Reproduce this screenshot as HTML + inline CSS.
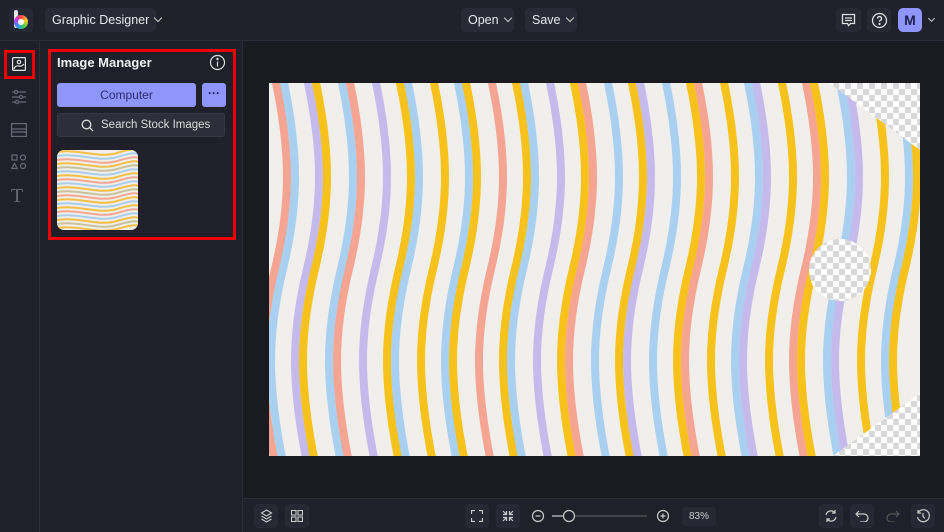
<!DOCTYPE html>
<html><head><meta charset="utf-8"><style>
*{margin:0;padding:0;box-sizing:border-box}
body{width:944px;height:532px;overflow:hidden;background:#1a1b21;font-family:"Liberation Sans",sans-serif;color:#e6e7ee;position:relative}
.top{position:absolute;left:0;top:0;width:944px;height:41px;background:#1f2029;border-bottom:1px solid #2b2d38}
.btn{position:absolute;background:#282a35;border-radius:4px;font-size:12.5px;color:#e8e9ef;line-height:24px;padding-left:7px;white-space:nowrap;height:24px}
.chev{display:inline-block;width:6px;height:6px;border-right:1.3px solid #ccc;border-bottom:1.3px solid #ccc;transform:rotate(45deg);margin-left:6px;position:relative;top:-3px}
.side{position:absolute;left:0;top:41px;width:40px;height:491px;background:#1f2029;border-right:1px solid #2b2d38}
.panel{position:absolute;left:40px;top:41px;width:203px;height:491px;background:#1f2029;border-right:1px solid #2b2d38}
.bottom{position:absolute;left:243px;top:498px;width:701px;height:34px;background:#1f2029;border-top:1px solid #2b2d38}
.ib{position:absolute;width:24px;height:24px;background:#262833;border-radius:4px}
svg{position:absolute}
</style></head><body>
<div class="top">
 <div class="ib" style="left:9px;top:8px;background:#262833"></div>
 <div style="position:absolute;left:14px;top:10px;width:4px;height:18px;background:#e8e8e8;border-radius:2px"></div>
 <div style="position:absolute;left:14px;top:15px;width:14px;height:14px;border-radius:50%;background:conic-gradient(#f44,#fc3,#4c4,#39f,#a4f,#f44)"></div>
 <div style="position:absolute;left:18px;top:19px;width:6px;height:6px;border-radius:50%;background:#fff"></div>
 <div class="btn" style="left:45px;top:8px;width:111px;">Graphic Designer<span class="chev"></span></div>
 <div class="btn" style="left:461px;top:8px;width:53px;">Open<span class="chev"></span></div>
 <div class="btn" style="left:525px;top:8px;width:52px;">Save<span class="chev"></span></div>
 <div class="ib" style="left:836px;top:8px;width:25px"></div>
 <svg style="left:841px;top:13px" width="15" height="15" viewBox="0 0 15 15" fill="none" stroke="#ddd" stroke-width="1.3"><path d="M1.5 1.5h12v9h-4l-2 2-1-2h-5z"/><path d="M4 5h7M4 7.5h7"/></svg>
 <div class="ib" style="left:867px;top:8px;"></div>
 <svg style="left:871px;top:12px" width="17" height="17" viewBox="0 0 17 17" fill="none" stroke="#ddd" stroke-width="1.3"><circle cx="8.5" cy="8.5" r="7"/><path d="M6.5 6.5a2 2 0 1 1 2.5 2c-.5.2-.5.6-.5 1.3"/><circle cx="8.5" cy="12" r=".5" fill="#ddd"/></svg>
 <div style="position:absolute;left:898px;top:8px;width:24px;height:24px;background:#8f96fb;border-radius:5px;color:#1f2050;font-size:14px;font-weight:bold;text-align:center;line-height:24px">M</div>
 <span class="chev" style="position:absolute;left:923px;top:16px;width:5px;height:5px"></span>
</div>
<div class="side">
 <div style="position:absolute;left:4px;top:9px;width:31px;height:29px;border:3px solid #e00"></div>
 <svg style="left:12px;top:16px" width="14" height="14" viewBox="0 0 14 14" fill="none" stroke="#e6e6e6" stroke-width="1.2"><rect x=".6" y=".6" width="12.8" height="12.8" rx="1"/><circle cx="7" cy="5" r="1.7"/><path d="M2 12c1-3 3-3.5 5-3s3 0 5-2"/></svg>
 <svg style="left:11px;top:48px" width="16" height="16" viewBox="0 0 16 16" fill="none" stroke="#666a78" stroke-width="1.2"><path d="M1 3h14M1 8h14M1 13h14"/><circle cx="5" cy="3" r="1.6" fill="#1f2029"/><circle cx="10" cy="8" r="1.6" fill="#1f2029"/><circle cx="6" cy="13" r="1.6" fill="#1f2029"/></svg>
 <svg style="left:11px;top:82px" width="16" height="14" viewBox="0 0 16 14" fill="none" stroke="#666a78" stroke-width="1.2"><rect x=".6" y=".6" width="14.8" height="12.8"/><path d="M1 6h14M1 9h14"/></svg>
 <svg style="left:11px;top:113px" width="16" height="16" viewBox="0 0 16 16" fill="none" stroke="#666a78" stroke-width="1.2"><rect x="1" y="1" width="5" height="5"/><circle cx="12" cy="3.5" r="2.5"/><path d="M3.5 9.5l2.7 5H.8z"/><circle cx="12" cy="12" r="2.5"/></svg>
 <div style="position:absolute;left:11px;top:144px;font-family:'Liberation Serif',serif;font-size:20px;color:#666a78">T</div>
</div>
<div class="panel">
 <div style="position:absolute;left:8px;top:8px;width:188px;height:191px;border:3px solid #e00"></div>
 <div style="position:absolute;left:17px;top:14px;font-size:13px;font-weight:bold;color:#f0f0f4">Image Manager</div>
 <svg style="left:169px;top:13px" width="17" height="17" viewBox="0 0 17 17" fill="none" stroke="#ddd" stroke-width="1.2"><circle cx="8.5" cy="8.5" r="7"/><path d="M8.5 7.5v5"/><circle cx="8.5" cy="5" r=".6" fill="#ddd"/></svg>
 <div style="position:absolute;left:17px;top:42px;width:139px;height:24px;background:#8f96fb;border-radius:3px;color:#2a2d6a;font-size:12px;text-align:center;line-height:24px">Computer</div>
 <div style="position:absolute;left:162px;top:42px;width:24px;height:24px;background:#8f96fb;border-radius:3px;color:#1a1b40;font-size:12px;text-align:center;line-height:20px;font-weight:bold">···</div>
 <div style="position:absolute;left:17px;top:72px;width:168px;height:24px;background:#2c2e39;border-radius:3px;border:1px solid #363845;color:#ddd;font-size:11.5px;line-height:22px;padding-left:43px;white-space:nowrap">Search Stock Images</div>
 <svg style="left:41px;top:78px" width="13" height="13" viewBox="0 0 13 13" fill="none" stroke="#ddd" stroke-width="1.3"><circle cx="5.5" cy="5.5" r="4.3"/><path d="M8.6 8.6l3.5 3.5"/></svg>
 <svg style="left:17px;top:109px" width="81" height="80" viewBox="0 0 81 80"><defs><clipPath id="tc"><rect width="81" height="80" rx="7"/></clipPath><path id="h" d="M-5,0 C20,-6 40,6 60,0 S80,-4 90,0" fill="none" stroke-width="2"/></defs><g clip-path="url(#tc)"><rect width="81" height="80" fill="#f2efe8"/>
 <use href="#h" y="3" stroke="#f2c04a"/><use href="#h" y="7" stroke="#a9cfee"/><use href="#h" y="11" stroke="#f5a896"/><use href="#h" y="15" stroke="#f2c04a"/><use href="#h" y="19" stroke="#c7c2a0"/><use href="#h" y="23" stroke="#a9cfee"/><use href="#h" y="27" stroke="#f2c04a"/><use href="#h" y="31" stroke="#f5a896"/><use href="#h" y="35" stroke="#a9cfee"/><use href="#h" y="39" stroke="#f2c04a"/><use href="#h" y="43" stroke="#c7c2a0"/><use href="#h" y="47" stroke="#f5a896"/><use href="#h" y="51" stroke="#f2c04a"/><use href="#h" y="55" stroke="#a9cfee"/><use href="#h" y="59" stroke="#f2c04a"/><use href="#h" y="63" stroke="#f5a896"/><use href="#h" y="67" stroke="#a9cfee"/><use href="#h" y="71" stroke="#f2c04a"/><use href="#h" y="75" stroke="#c7c2a0"/><use href="#h" y="79" stroke="#f2c04a"/></g></svg>
</div>
<svg style="left:269px;top:83px" width="651" height="373" viewBox="0 0 651 373">
 <defs>
  <path id="w" d="M0,-5 C16,70 16,120 0,186 S-16,300 0,380" fill="none" stroke-width="8"/>
  <pattern id="ck" width="12" height="12" patternUnits="userSpaceOnUse"><rect width="12" height="12" fill="#fff"/><rect width="6" height="6" fill="#d8d8d8"/><rect x="6" y="6" width="6" height="6" fill="#d8d8d8"/></pattern>
 </defs>
 <rect width="651" height="373" fill="#f1efec"/>
 <g>
  <use href="#w" x="6" stroke="#f6a593"/><use href="#w" x="14" stroke="#a9d0f0"/><use href="#w" x="38" stroke="#c4bbec"/><use href="#w" x="46" stroke="#f7c21b"/><use href="#w" x="72" stroke="#a9d0f0"/><use href="#w" x="80" stroke="#f6a593"/><use href="#w" x="106" stroke="#c4bbec"/><use href="#w" x="130" stroke="#f7c21b"/><use href="#w" x="138" stroke="#a9d0f0"/><use href="#w" x="164" stroke="#f7c21b"/><use href="#w" x="188" stroke="#a9d0f0"/><use href="#w" x="196" stroke="#f7c21b"/><use href="#w" x="222" stroke="#f6a593"/><use href="#w" x="246" stroke="#f7c21b"/><use href="#w" x="254" stroke="#a9d0f0"/><use href="#w" x="280" stroke="#c4bbec"/><use href="#w" x="304" stroke="#f7c21b"/><use href="#w" x="312" stroke="#f6a593"/><use href="#w" x="338" stroke="#a9d0f0"/><use href="#w" x="362" stroke="#f7c21b"/><use href="#w" x="370" stroke="#c4bbec"/><use href="#w" x="396" stroke="#a9d0f0"/><use href="#w" x="420" stroke="#f7c21b"/><use href="#w" x="428" stroke="#f6a593"/><use href="#w" x="454" stroke="#f7c21b"/><use href="#w" x="478" stroke="#a9d0f0"/><use href="#w" x="486" stroke="#c4bbec"/><use href="#w" x="512" stroke="#f7c21b"/><use href="#w" x="536" stroke="#f6a593"/><use href="#w" x="544" stroke="#f7c21b"/><use href="#w" x="570" stroke="#a9d0f0"/><use href="#w" x="578" stroke="#c4bbec"/><use href="#w" x="604" stroke="#f7c21b"/><use href="#w" x="628" stroke="#a9d0f0"/><use href="#w" x="636" stroke="#f7c21b"/>
 </g>
 <polygon points="560,0 651,0 651,67" fill="url(#ck)"/>
 <polygon points="651,310 651,373 564,373" fill="url(#ck)"/>
 <circle cx="571" cy="187" r="31" fill="url(#ck)"/>
</svg>
<div class="bottom">
 <div class="ib" style="left:11px;top:5px"></div>
 <svg style="left:17px;top:10px" width="13" height="14" viewBox="0 0 13 14" fill="none" stroke="#ccc" stroke-width="1.1"><path d="M6.5 1l5 3-5 3-5-3z"/><path d="M1.5 7l5 3 5-3M1.5 10l5 3 5-3"/></svg>
 <div class="ib" style="left:42px;top:5px"></div>
 <svg style="left:48px;top:11px" width="12" height="12" viewBox="0 0 12 12" fill="none" stroke="#ccc" stroke-width="1.1"><rect x=".5" y=".5" width="4.5" height="4.5"/><rect x="7" y=".5" width="4.5" height="4.5"/><rect x=".5" y="7" width="4.5" height="4.5"/><rect x="7" y="7" width="4.5" height="4.5"/></svg>
 <div class="ib" style="left:222px;top:5px"></div>
 <svg style="left:228px;top:11px" width="12" height="12" viewBox="0 0 12 12" fill="none" stroke="#ccc" stroke-width="1.2"><path d="M.5 4V.5H4M8 .5h3.5V4M11.5 8v3.5H8M4 11.5H.5V8"/></svg>
 <div class="ib" style="left:253px;top:5px"></div>
 <svg style="left:259px;top:11px" width="12" height="12" viewBox="0 0 12 12" fill="none" stroke="#ccc" stroke-width="1.2"><path d="M1 1l3.5 3.5M1 4.5h3.5V1M11 1L7.5 4.5M7.5 1v3.5H11M1 11l3.5-3.5M1 7.5h3.5V11M11 11L7.5 7.5M7.5 11V7.5H11"/></svg>
 <svg style="left:288px;top:10px" width="125" height="14" viewBox="0 0 125 14" fill="none" stroke="#ccc" stroke-width="1.2"><circle cx="7" cy="7" r="5.5"/><path d="M4.5 7h5"/><path d="M21 7h11"/><circle cx="38" cy="7" r="5.5"/><path d="M44 7h72" stroke="#666" stroke-width="1"/></svg>
 <svg style="left:413px;top:10px" width="14" height="14" viewBox="0 0 14 14" fill="none" stroke="#ccc" stroke-width="1.2"><circle cx="7" cy="7" r="5.5"/><path d="M4.5 7h5M7 4.5v5"/></svg>
 <div style="position:absolute;left:439px;top:8px;width:34px;height:19px;background:#262833;border-radius:3px;font-size:10px;color:#ccc;text-align:center;line-height:19px">83%</div>
 <div class="ib" style="left:576px;top:5px"></div>
 <svg style="left:581px;top:10px" width="14" height="14" viewBox="0 0 14 14" fill="none" stroke="#ccc" stroke-width="1.2"><path d="M2 6a5 5 0 0 1 9-2M12 8a5 5 0 0 1-9 2M11 1v3H8M3 13v-3h3"/></svg>
 <div class="ib" style="left:607px;top:5px"></div>
 <svg style="left:612px;top:11px" width="14" height="12" viewBox="0 0 14 12" fill="none" stroke="#ccc" stroke-width="1.2"><path d="M4 1L1 4l3 3M1 4h8a4 4 0 0 1 0 8H5"/></svg>
 <svg style="left:643px;top:11px" width="14" height="12" viewBox="0 0 14 12" fill="none" stroke="#555" stroke-width="1.2"><path d="M10 1l3 3-3 3M13 4H5a4 4 0 0 0 0 8h4"/></svg>
 <div class="ib" style="left:668px;top:5px"></div>
 <svg style="left:673px;top:10px" width="14" height="14" viewBox="0 0 14 14" fill="none" stroke="#ccc" stroke-width="1.2"><path d="M2 4a6 6 0 1 1-.5 4M2 1v3h3M7 4v3.5l2 2"/></svg>
</div>
</body></html>
